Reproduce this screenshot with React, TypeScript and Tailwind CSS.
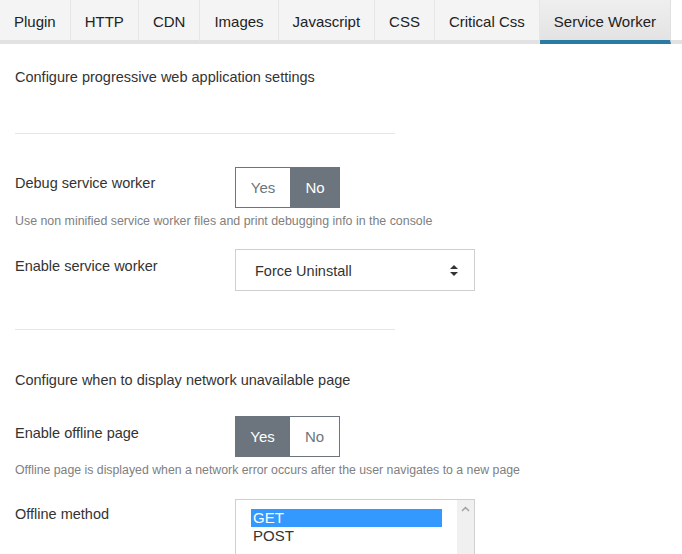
import React from "react";

const tabs = ["Plugin", "HTTP", "CDN", "Images", "Javascript", "CSS", "Critical Css", "Service Worker"];

const Toggle = ({ value }: { value: "yes" | "no" }) => {
  const on = "bg-[#6c757d] text-white border border-[#6c757d]";
  const off = "bg-white text-[#6c757d] border border-[#6c757d]";
  return (
    <div className="flex h-[41px] text-[15px]">
      <div className={`w-[55px] flex items-center justify-center ${value === "yes" ? on : off + " border-r-0"}`}>Yes</div>
      <div className={`w-[50px] flex items-center justify-center ${value === "no" ? on : off + " border-l-0"}`}>No</div>
    </div>
  );
};

const App = () => {
  return (
    <div className="w-[682px] h-[554px] overflow-hidden bg-white font-['Liberation_Sans',Arial,sans-serif] text-[15px] leading-[21px] text-[#333]">
      <nav className="flex h-[44px]">
        {tabs.map((t) =>
          t === "Service Worker" ? (
            <div
              key={t}
              className="h-[44px] px-[14px] pt-[2px] flex items-center border-r border-[#e0e0e0] border-b-[4px] border-b-[#2a7ba3] bg-gradient-to-b from-[#efefef] to-[#e3e3e3] text-[#222]"
            >
              {t}
            </div>
          ) : (
            <div
              key={t}
              className="h-[44px] px-[14px] pt-[2px] flex items-center border-r border-[#e6e6e6] border-b-[4px] border-b-[#e2e2e2] bg-[#f4f4f4] text-[#222]"
            >
              {t}
            </div>
          )
        )}
        <div className="flex-1 h-[44px] border-b-[4px] border-b-[#e2e2e2]" />
      </nav>

      <div className="px-[15px] text-[14.5px]">
        <p className="mt-[23px]">Configure progressive web application settings</p>
        <div className="mt-[45px] w-[380px] h-px bg-[#e6e6e6]" />

        <div className="mt-[33px] flex">
          <div className="w-[220px] pt-[6px]">Debug service worker</div>
          <Toggle value="no" />
        </div>
        <p className="mt-[5px] text-[12.4px] leading-[16px] text-[#808080]">
          Use non minified service worker files and print debugging info in the console
        </p>

        <div className="mt-[20px] flex">
          <div className="w-[220px] pt-[7px]">Enable service worker</div>
          <div className="w-[240px] h-[42px] border border-[#cfcfcf] flex items-center justify-between pl-[19px] pr-[16px] pt-[2px]">
            <span>Force Uninstall</span>
            <svg width="8" height="11" viewBox="0 0 8 11" className="mb-[2px]">
              <path d="M4 0L8 4H0Z" fill="#333" />
              <path d="M4 11L8 7H0Z" fill="#333" />
            </svg>
          </div>
        </div>

        <div className="mt-[38px] w-[380px] h-px bg-[#e6e6e6]" />
        <p className="mt-[40px]">Configure when to display network unavailable page</p>

        <div className="mt-[25px] flex">
          <div className="w-[220px] pt-[7px]">Enable offline page</div>
          <Toggle value="yes" />
        </div>
        <p className="mt-[5px] text-[12.3px] leading-[16px] text-[#808080]">
          Offline page is displayed when a network error occurs after the user navigates to a new page
        </p>

        <div className="mt-[21px] flex">
          <div className="w-[220px] pt-[5px]">Offline method</div>
          <div className="w-[240px] h-[80px] border border-[#cfcfcf] flex">
            <div className="flex-1 pl-[15px] pr-[15px] pt-[9px] text-[15px]">
              <div className="h-[18px] leading-[18px] bg-[#3399ff] text-white pl-[2px]">GET</div>
              <div className="h-[18px] leading-[18px] text-[#333] pl-[2px]">POST</div>
            </div>
            <div className="w-[17px] bg-[#f0f0f0] flex justify-center pt-[6px]">
              <svg width="9" height="6" viewBox="0 0 9 6">
                <path d="M1 5L4.5 1.5L8 5" stroke="#a3a3a3" strokeWidth="1.5" fill="none" />
              </svg>
            </div>
          </div>
        </div>
      </div>
    </div>
  );
};

export default App;
